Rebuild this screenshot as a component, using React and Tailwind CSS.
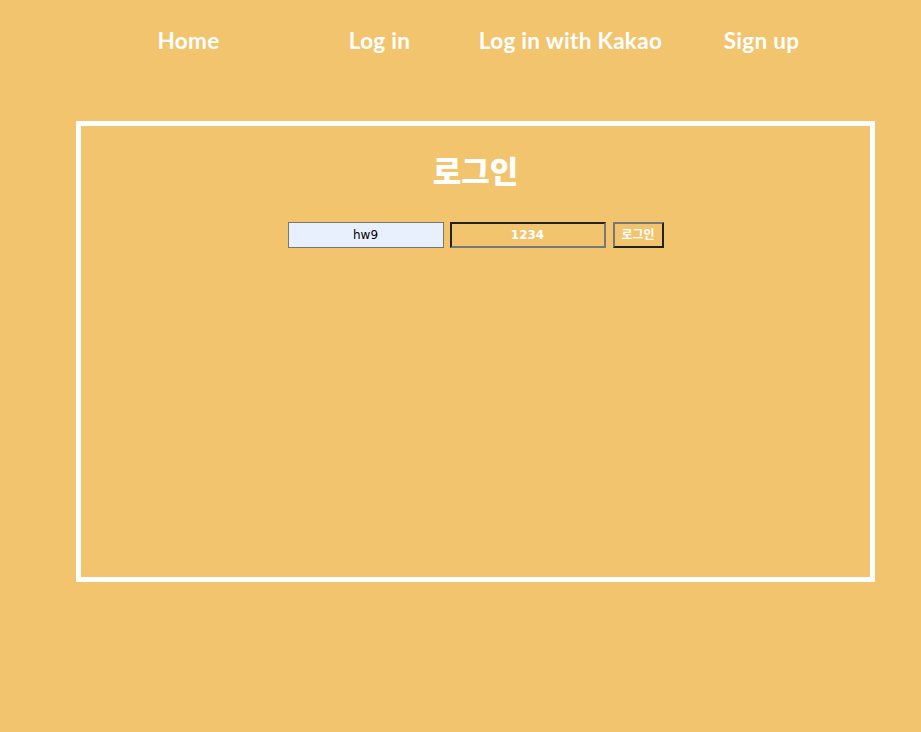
export default function App() {
  const links = ["Home", "Log in", "Log in with Kakao", "Sign up"];

  return (
    <div className="min-h-[732px] w-full bg-[#f2c46e] font-['Lato','Noto_Sans_CJK_KR',sans-serif] text-white">
      <nav className="flex pl-[93px] pt-[27px]">
        {links.map((l) => (
          <a key={l} href="#" className="w-[191px] text-center text-[22.5px] leading-[28px] font-bold tracking-[0.3px]">
            {l}
          </a>
        ))}
      </nav>

      <div className="ml-[76px] mt-[66px] h-[461px] w-[799px] border-[5px] border-white">
        <h2 className="mt-[24px] text-center font-['Noto_Sans_CJK_KR',sans-serif] text-[31px] leading-[40px] font-black">
          로그인
        </h2>
        <form className="mt-[32px] flex justify-center gap-[6px] font-['DejaVu_Sans','Noto_Sans_CJK_KR',sans-serif] text-[12px]">
          <input
            defaultValue="hw9"
            className="h-[26px] w-[156px] border border-[#767676] bg-[#e8f0fe] text-center text-black outline-none"
          />
          <input
            type="text"
            defaultValue="1234"
            className="h-[26px] w-[156px] border-2 border-t-[#222] border-l-[#222] border-r-[#777] border-b-[#777] bg-transparent text-center font-bold text-white outline-none"
          />
          <button
            type="button"
            className="ml-[1px] h-[26px] w-[51px] border-2 border-t-[#777] border-l-[#777] border-r-[#222] border-b-[#222] text-[12px] font-bold text-white"
          >
            로그인
          </button>
        </form>
      </div>
    </div>
  );
}
